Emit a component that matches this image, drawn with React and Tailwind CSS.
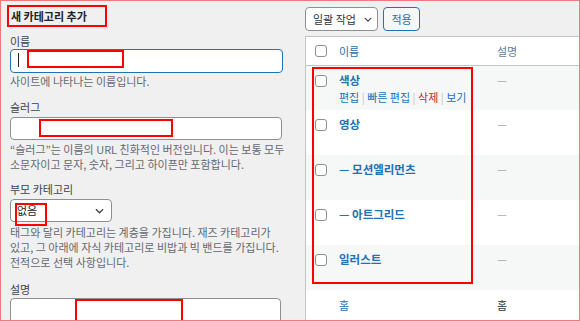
import React from "react";

const FONT = { fontFamily: '"Noto Sans CJK KR", "Noto Sans", sans-serif' };

function Box({ className }) {
  return <div className={`pointer-events-none absolute border-2 border-[#ff0000] ${className}`} />;
}

function Check() {
  return <span className="block h-[12px] w-[12px] rounded-[3px] border border-[#8c8f94] bg-white" />;
}

function Chevron({ className }) {
  return (
    <svg viewBox="0 0 10 6" className={className} fill="none" stroke="#3c434a" strokeWidth="1.4">
      <polyline points="1,1 5,5 9,1" />
    </svg>
  );
}

const ROWS = [
  { name: "색상", actions: true, desc: "—" },
  { name: "영상", desc: "—" },
  { name: "— 모션엘리먼츠", desc: "—" },
  { name: "— 아트그리드", desc: "—" },
  { name: "일러스트", desc: "—" },
];

function AddForm() {
  return (
    <div className="w-[282px] shrink-0 pl-[9px] text-[11px] text-[#3c434a]">
      <div className="-ml-[3px] mt-[4px] flex h-[22px] w-[100px] items-center border-2 border-[#ff0000] pl-[2px]">
        <h2 className="text-[11px] font-bold leading-[18px] text-[#1d2327]">새 카테고리 추가</h2>
      </div>

      <div className="mt-[7px] leading-[14px]">이름</div>
      <div className="relative mt-[1px] h-[24px] w-[273px] rounded-[4px] border-[1.5px] border-[#2271b1] bg-white">
        <span className="absolute left-[7px] top-[3px] h-[14px] w-px bg-[#1d2327]" />
        <Box className="left-[16px] top-0 h-[18px] w-[97px]" />
      </div>
      <div className="mt-[1px] leading-[14px] text-[#646970]">사이트에 나타나는 이름입니다.</div>

      <div className="mt-[12px] leading-[14px]">슬러그</div>
      <div className="relative mt-[3px] h-[23px] w-[272px] rounded-[4px] border border-[#8c8f94] bg-white">
        <Box className="left-[28px] top-[1px] h-[18px] w-[134px]" />
      </div>
      <div className="mt-[1.5px] whitespace-nowrap leading-[15px] text-[#646970]">
        “슬러그”는 이름의 URL 친화적인 버전입니다. 이는 보통 모두
        <br />
        소문자이고 문자, 숫자, 그리고 하이픈만 포함합니다.
      </div>

      <div className="mt-[10.5px] leading-[14px]">부모 카테고리</div>
      <div className="relative mt-[3px] flex h-[23px] w-[102px] items-center justify-between rounded-[4px] border border-[#8c8f94] bg-white pl-[6px] pr-[7px]">
        <span className="text-[#1d2327]">없음</span>
        <Chevron className="h-[6px] w-[9px]" />
        <Box className="left-[4px] top-[3px] h-[23px] w-[32px]" />
      </div>
      <div className="mt-[2.5px] whitespace-nowrap leading-[15px] text-[#646970]">
        태그와 달리 카테고리는 계층을 가집니다. 재즈 카테고리가
        <br />
        있고, 그 아래에 자식 카테고리로 비밥과 빅 밴드를 가집니다.
        <br />
        전적으로 선택 사항입니다.
      </div>

      <div className="mt-[12.5px] leading-[14px]">설명</div>
      <div className="relative mt-[2px] h-[40px] w-[271px] rounded-[4px] border border-[#8c8f94] bg-white">
        <Box className="left-[64px] top-0 h-[26px] w-[108px]" />
      </div>
    </div>
  );
}

function CategoryTable() {
  return (
    <div className="ml-[22px] w-[300px] shrink-0 text-[11px]">
      <div className="mt-[6px] flex h-[24px] gap-[5px]">
        <div className="flex w-[73px] items-center justify-between rounded-[4px] border border-[#8c8f94] bg-white pl-[7px] pr-[5px] text-[#2c3338]">
          <span>일괄 작업</span>
          <Chevron className="h-[5px] w-[8px]" />
        </div>
        <div className="flex w-[37px] items-center justify-center rounded-[4px] border border-[#2271b1] bg-[#f6f7f7] text-[#2271b1]">
          적용
        </div>
      </div>

      <div className="relative mt-[5px] border-l border-t border-[#c3c4c7] bg-white">
        <div className="grid h-[29px] grid-cols-[33px_158px_1fr] items-center border-b border-[#c3c4c7]">
          <div className="pl-[9px]">
            <Check />
          </div>
          <div className="text-[#2271b1]">이름</div>
          <div className="text-[#5b7fa0]">설명</div>
        </div>

        {ROWS.map((row, i) => (
          <div
            key={row.name}
            className={`grid grid-cols-[33px_158px_1fr] ${i === 0 ? "h-[44px]" : "h-[45px]"} ${
              i % 2 === 0 ? "bg-[#f6f7f7]" : "bg-white"
            }`}
          >
            <div className="pl-[9px] pt-[9px]">
              <Check />
            </div>
            <div className="pt-[6px]">
              <div className="text-[11.5px] font-bold leading-[16px] text-[#2271b1]">{row.name}</div>
              {row.actions && (
                <div className="mt-[2px] whitespace-nowrap leading-[14px]">
                  <span className="text-[#2271b1]">편집</span>
                  <span className="text-[#c3c4c7]"> | </span>
                  <span className="text-[#2271b1]">빠른 편집</span>
                  <span className="text-[#c3c4c7]"> | </span>
                  <span className="text-[#b32d2e]">삭제</span>
                  <span className="text-[#c3c4c7]"> | </span>
                  <span className="text-[#2271b1]">보기</span>
                </div>
              )}
            </div>
            <div className="pt-[6px] leading-[16px] text-[#a7aaad]">{row.desc}</div>
          </div>
        ))}

        <div className="grid h-[40px] grid-cols-[33px_158px_1fr] bg-white">
          <div />
          <div className="pt-[7px] leading-[16px] text-[#2271b1]">홈</div>
          <div className="pt-[7px] leading-[16px] text-[#2c3338]">홈</div>
        </div>

        <Box className="left-[6px] top-[30px] h-[217px] w-[161px]" />
      </div>
    </div>
  );
}

export default function App() {
  return (
    <div
      style={FONT}
      className="flex h-[321px] w-[580px] overflow-hidden border border-[#f07a7a] bg-[#f0f0f1]"
    >
      <AddForm />
      <CategoryTable />
    </div>
  );
}
